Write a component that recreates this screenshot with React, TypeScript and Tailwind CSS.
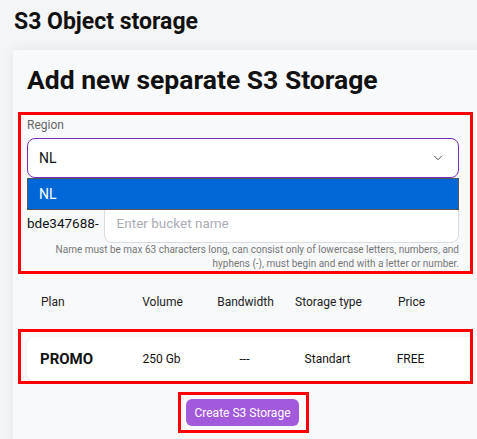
import { ChevronDown } from "lucide-react";

const columns = "grid grid-cols-[80px_83px_83px_83px_83px] items-center";

export default function App() {
  return (
    <div className="w-[477px] h-[439px] overflow-hidden bg-[#f4f5f7] font-['Roboto',sans-serif] text-[#111]">
      <h1 className="pl-[14px] pt-[9px] text-[23px] leading-[26px] font-bold">
        S3 Object storage
      </h1>

      <div className="ml-[13px] mt-[15px] w-[480px] h-[420px] bg-[#f8f9fb] shadow-[0_0_12px_rgba(0,0,0,0.07)] pt-[14px]">
        <h2 className="pl-[14px] text-[26.5px] leading-[31px] font-bold">
          Add new separate S3 Storage
        </h2>

        {/* Region + bucket name */}
        <div className="mt-[17px] ml-[5px] w-[455px] border-[3px] border-[#ff0000] pl-[6px] pr-[11px] pt-[2px]">
          <div className="text-[12px] leading-[16px] text-[#666]">Region</div>
          <div className="relative mt-[5px]">
            <div className="h-[40px] rounded-[8px] border border-[#7b2cbf] bg-white flex items-center justify-between pl-[11px] pr-[13px]">
              <span className="text-[14px]">NL</span>
              <ChevronDown size={14} strokeWidth={1.6} className="text-[#444]" />
            </div>
            <div className="absolute left-0 right-0 top-full z-10 h-[32px] bg-[#0067d6] border border-[#555] flex items-center pl-[11px] text-[14px] text-white">
              NL
            </div>
          </div>
          <div className="mt-[25px] flex items-center gap-[5px]">
            <span className="text-[13.5px]">bde347688-</span>
            <input
              placeholder="Enter bucket name"
              className="flex-1 h-[40px] rounded-[8px] border border-[#d9dbe0] bg-white pl-[12px] text-[13.5px] placeholder:text-[#a9adb5] outline-none"
            />
          </div>
          <p className="text-right text-[10px] leading-[14px] text-[#777]">
            Name must be max 63 characters long, can consist only of lowercase letters, numbers, and
            <br />
            hyphens (-), must begin and end with a letter or number.
          </p>
        </div>

        {/* Plan table header */}
        <div className={`${columns} mt-[20px] ml-[28px] text-[12px] leading-[16px] text-[#222]`}>
          <span>Plan</span>
          <span className="text-center">Volume</span>
          <span className="text-center">Bandwidth</span>
          <span className="text-center">Storage type</span>
          <span className="text-center">Price</span>
        </div>

        {/* Plan row */}
        <div className="mt-[19px] ml-[5px] w-[455px] border-[3px] border-[#ff0000] pl-[6px] pt-[5px]">
          <div className={`${columns} h-[44px] rounded-l-[8px] bg-white shadow-[0_1px_3px_rgba(0,0,0,0.08)] pl-[13px] text-[12px]`}>
            <span className="text-[15px] font-bold">PROMO</span>
            <span className="text-center">250 Gb</span>
            <span className="text-center">---</span>
            <span className="text-center">Standart</span>
            <span className="text-center">FREE</span>
          </div>
        </div>

        <div className="mt-[8px] ml-[165px] w-fit border-[3px] border-[#ff0000] pl-[5px] pr-[7px] py-[4px]">
          <button className="w-[113px] h-[27px] rounded-[6px] bg-[#a259db] text-[12px] text-white">
            Create S3 Storage
          </button>
        </div>
      </div>
    </div>
  );
}
